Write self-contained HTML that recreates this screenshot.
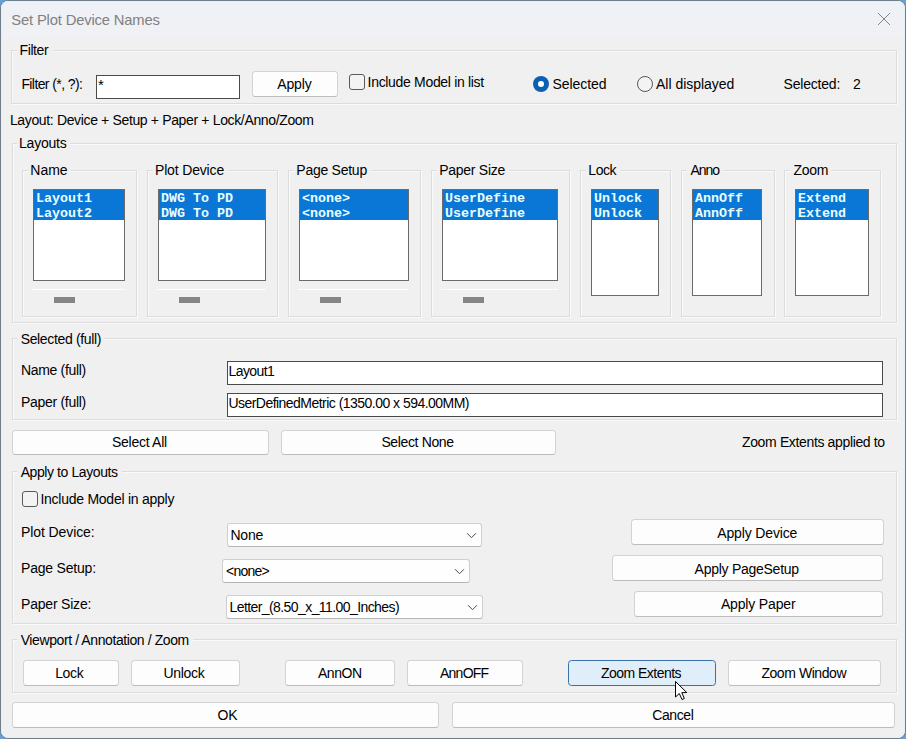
<!DOCTYPE html>
<html><head><meta charset="utf-8"><title>Set Plot Device Names</title>
<style>
*{margin:0;padding:0;box-sizing:border-box}
html,body{width:906px;height:739px;overflow:hidden;background:#6a9fd2}
#win{position:absolute;left:0;top:0;width:906px;height:739px;border-radius:8px;background:#f0f0f0;border:1px solid #6e7e8a;overflow:hidden}
#win::before{content:"";position:absolute;left:0;top:0;right:0;bottom:0;border:1px solid #e3f0f9;border-radius:7px;pointer-events:none;z-index:5}
#title{position:absolute;left:0;top:0;width:904px;height:37px;background:linear-gradient(#eef1f7,#f1f1f5)}
.t{position:absolute;white-space:pre;line-height:1;font-family:'Liberation Sans',sans-serif}
.lbt{font-family:'Liberation Mono',monospace;font-weight:bold;font-size:13.333px;color:#e8ffff}
.abs{position:absolute}
.grp{position:absolute;border:1px solid #dcdcdc;box-shadow:inset 1px 1px 0 #fafafa,1px 1px 0 #fafafa}
.gap{position:absolute;background:#f0f0f0}
.tb{position:absolute;background:#fff;border:1px solid #4a4a4a}
.lb{position:absolute;background:#fff;border:1px solid #6b6b6b}
.sel{position:absolute;background:#0a76d6}
.trk{position:absolute;background:#fdfdfd}
.thumb{position:absolute;background:#858585}
.btn{position:absolute;background:#fdfdfd;border:1px solid #d3d3d3;border-bottom-color:#bcbcbc;border-radius:3.5px}
.btn.hot{background:#e0eef9;border:1px solid #3a71a8}
.cb{position:absolute;background:#fefefe;border:1px solid #cfcfcf;border-bottom-color:#b5b5b5;border-radius:3px}
.chev{position:absolute}
.chk{position:absolute;border:1px solid #5a5a5a;border-radius:3px;background:#f3f3f3}
.radio{position:absolute;width:16px;height:16px;border-radius:50%;border:1.3px solid #595959;background:#f3f3f3}
.radio.on{border:none;background:#0c60b3}
.radio.on::after{content:"";position:absolute;left:5px;top:5px;width:6px;height:6px;border-radius:50%;background:#fff}
</style></head>
<body>
<div id="win"><div id="title"></div>
<div id="c" style="position:absolute;left:-1px;top:-1px;width:906px;height:739px">
<div class="grp" style="left:11px;top:50px;width:886px;height:54px;"></div>
<div class="gap" style="left:17px;top:49px;width:36px;height:4px"></div>
<div class="grp" style="left:12px;top:143px;width:885px;height:180px;"></div>
<div class="gap" style="left:17px;top:142px;width:53px;height:4px"></div>
<div class="grp" style="left:22px;top:170px;width:115px;height:147px;"></div>
<div class="gap" style="left:28px;top:169px;width:43px;height:4px"></div>
<div class="grp" style="left:147px;top:170px;width:131px;height:147px;"></div>
<div class="gap" style="left:153px;top:169px;width:75px;height:4px"></div>
<div class="grp" style="left:288px;top:170px;width:133px;height:147px;"></div>
<div class="gap" style="left:294px;top:169px;width:77px;height:4px"></div>
<div class="grp" style="left:431px;top:170px;width:139px;height:147px;"></div>
<div class="gap" style="left:437px;top:169px;width:72px;height:4px"></div>
<div class="grp" style="left:580px;top:170px;width:91px;height:147px;"></div>
<div class="gap" style="left:586px;top:169px;width:35px;height:4px"></div>
<div class="grp" style="left:681px;top:170px;width:94px;height:147px;"></div>
<div class="gap" style="left:687px;top:169px;width:37px;height:4px"></div>
<div class="grp" style="left:784px;top:170px;width:97px;height:147px;"></div>
<div class="gap" style="left:790px;top:169px;width:41px;height:4px"></div>
<div class="grp" style="left:12px;top:338px;width:885px;height:82px;"></div>
<div class="gap" style="left:17px;top:337px;width:87px;height:4px"></div>
<div class="grp" style="left:12px;top:471px;width:885px;height:153px;"></div>
<div class="gap" style="left:17px;top:470px;width:105px;height:4px"></div>
<div class="grp" style="left:12px;top:639px;width:885px;height:54px;"></div>
<div class="gap" style="left:17px;top:638px;width:176px;height:4px"></div>
<div class="tb" style="left:96px;top:75px;width:144px;height:24px;"></div>
<div class="tb" style="left:227px;top:361px;width:656px;height:24px;"></div>
<div class="tb" style="left:227px;top:393px;width:656px;height:24px;"></div>
<div class="lb" style="left:33px;top:189px;width:92px;height:92px;"></div>
<div class="sel" style="left:34px;top:190px;width:90px;height:30px;"></div>
<div class="trk" style="left:32px;top:289px;width:93px;height:1px;"></div>
<div class="thumb" style="left:54px;top:297px;width:21px;height:6px;"></div>
<div class="lb" style="left:158px;top:189px;width:108px;height:92px;"></div>
<div class="sel" style="left:159px;top:190px;width:106px;height:30px;"></div>
<div class="trk" style="left:157px;top:289px;width:109px;height:1px;"></div>
<div class="thumb" style="left:179px;top:297px;width:21px;height:6px;"></div>
<div class="lb" style="left:299px;top:189px;width:110px;height:92px;"></div>
<div class="sel" style="left:300px;top:190px;width:108px;height:30px;"></div>
<div class="trk" style="left:298px;top:289px;width:111px;height:1px;"></div>
<div class="thumb" style="left:320px;top:297px;width:21px;height:6px;"></div>
<div class="lb" style="left:442px;top:189px;width:116px;height:92px;"></div>
<div class="sel" style="left:443px;top:190px;width:114px;height:30px;"></div>
<div class="trk" style="left:441px;top:289px;width:117px;height:1px;"></div>
<div class="thumb" style="left:463px;top:297px;width:21px;height:6px;"></div>
<div class="lb" style="left:591px;top:189px;width:68px;height:107px;"></div>
<div class="sel" style="left:592px;top:190px;width:66px;height:30px;"></div>
<div class="lb" style="left:692px;top:189px;width:70px;height:107px;"></div>
<div class="sel" style="left:693px;top:190px;width:68px;height:30px;"></div>
<div class="lb" style="left:795px;top:189px;width:74px;height:107px;"></div>
<div class="sel" style="left:796px;top:190px;width:72px;height:30px;"></div>
<div class="btn" style="left:252px;top:71px;width:86px;height:26px;"></div>
<div class="btn" style="left:12px;top:430px;width:257px;height:25px;"></div>
<div class="btn" style="left:281px;top:430px;width:275px;height:25px;"></div>
<div class="btn" style="left:631px;top:519px;width:253px;height:26px;"></div>
<div class="btn" style="left:612px;top:555px;width:271px;height:26px;"></div>
<div class="btn" style="left:634px;top:591px;width:249px;height:26px;"></div>
<div class="btn" style="left:23px;top:660px;width:96px;height:26px;"></div>
<div class="btn" style="left:131px;top:660px;width:109px;height:26px;"></div>
<div class="btn" style="left:285px;top:660px;width:110px;height:26px;"></div>
<div class="btn" style="left:407px;top:660px;width:116px;height:26px;"></div>
<div class="btn hot" style="left:568px;top:660px;width:148px;height:26px;"></div>
<div class="btn" style="left:728px;top:660px;width:153px;height:26px;"></div>
<div class="btn" style="left:12px;top:702px;width:427px;height:26px;"></div>
<div class="btn" style="left:452px;top:702px;width:443px;height:26px;"></div>
<div class="cb" style="left:227px;top:523px;width:255px;height:24px;"></div>
<svg class="chev" style="left:466px;top:532px" width="11" height="7" viewBox="0 0 11 7"><path d="M1 1.2 L5.5 5.7 L10 1.2" fill="none" stroke="#4a4a4a" stroke-width="1"/></svg>
<div class="cb" style="left:222px;top:559px;width:248px;height:24px;"></div>
<svg class="chev" style="left:454px;top:568px" width="11" height="7" viewBox="0 0 11 7"><path d="M1 1.2 L5.5 5.7 L10 1.2" fill="none" stroke="#4a4a4a" stroke-width="1"/></svg>
<div class="cb" style="left:226px;top:595px;width:257px;height:24px;"></div>
<svg class="chev" style="left:467px;top:604px" width="11" height="7" viewBox="0 0 11 7"><path d="M1 1.2 L5.5 5.7 L10 1.2" fill="none" stroke="#4a4a4a" stroke-width="1"/></svg>
<div class="chk" style="left:349px;top:74px;width:16px;height:16px;"></div>
<div class="chk" style="left:22px;top:491px;width:16px;height:16px;"></div>
<div class="radio on" style="left:533px;top:76px"></div>
<div class="radio" style="left:637px;top:76px"></div>
<svg class="abs" style="left:876px;top:11px" width="16" height="16" viewBox="0 0 16 16"><path d="M2 2 L14 14 M14 2 L2 14" stroke="#858585" stroke-width="1" fill="none"/></svg>
<svg class="abs" style="left:675px;top:681px" width="14" height="20" viewBox="0 0 14 20"><path d="M0.5 0.5 L0.5 16 L4.3 12.5 L7 18.5 L9.3 17.5 L6.8 11.6 L11.8 11.6 Z" fill="#fff" stroke="#000" stroke-width="1" stroke-linejoin="round"/></svg>
<div class="t" style="left:11.30px;top:12.97px;font-size:14.8px;color:#808080;letter-spacing:-0.177px;font-weight:normal;font-family:'Liberation Sans';">Set Plot Device Names</div>
<div class="t" style="left:19.50px;top:42.95px;font-size:14px;color:#000;letter-spacing:-0.390px;font-weight:normal;font-family:'Liberation Sans';">Filter</div>
<div class="t" style="left:21.40px;top:77.05px;font-size:14px;color:#000;letter-spacing:-0.595px;font-weight:normal;font-family:'Liberation Sans';">Filter (*, ?):</div>
<div class="t" style="left:98.00px;top:76.90px;font-size:15px;color:#000;letter-spacing:0.000px;font-weight:normal;font-family:'Liberation Sans';">*</div>
<div class="t" style="left:277.20px;top:76.75px;font-size:14px;color:#000;letter-spacing:-0.105px;font-weight:normal;font-family:'Liberation Sans';">Apply</div>
<div class="t" style="left:367.60px;top:75.15px;font-size:14px;color:#000;letter-spacing:-0.318px;font-weight:normal;font-family:'Liberation Sans';">Include Model in list</div>
<div class="t" style="left:552.60px;top:77.15px;font-size:14px;color:#000;letter-spacing:-0.071px;font-weight:normal;font-family:'Liberation Sans';">Selected</div>
<div class="t" style="left:656.00px;top:77.15px;font-size:14px;color:#000;letter-spacing:-0.018px;font-weight:normal;font-family:'Liberation Sans';">All displayed</div>
<div class="t" style="left:783.50px;top:77.15px;font-size:14px;color:#000;letter-spacing:-0.198px;font-weight:normal;font-family:'Liberation Sans';">Selected:</div>
<div class="t" style="left:853.00px;top:77.15px;font-size:14px;color:#000;letter-spacing:0.000px;font-weight:normal;font-family:'Liberation Sans';">2</div>
<div class="t" style="left:9.90px;top:113.15px;font-size:14px;color:#000;letter-spacing:-0.352px;font-weight:normal;font-family:'Liberation Sans';">Layout: Device + Setup + Paper + Lock/Anno/Zoom</div>
<div class="t" style="left:19.00px;top:136.15px;font-size:14px;color:#000;letter-spacing:-0.222px;font-weight:normal;font-family:'Liberation Sans';">Layouts</div>
<div class="t" style="left:30.30px;top:163.35px;font-size:14px;color:#000;letter-spacing:-0.020px;font-weight:normal;font-family:'Liberation Sans';">Name</div>
<div class="t" style="left:155.00px;top:163.35px;font-size:14px;color:#000;letter-spacing:-0.162px;font-weight:normal;font-family:'Liberation Sans';">Plot Device</div>
<div class="t" style="left:296.30px;top:163.35px;font-size:14px;color:#000;letter-spacing:-0.254px;font-weight:normal;font-family:'Liberation Sans';">Page Setup</div>
<div class="t" style="left:439.20px;top:163.35px;font-size:14px;color:#000;letter-spacing:-0.266px;font-weight:normal;font-family:'Liberation Sans';">Paper Size</div>
<div class="t" style="left:588.30px;top:163.35px;font-size:14px;color:#000;letter-spacing:-0.424px;font-weight:normal;font-family:'Liberation Sans';">Lock</div>
<div class="t" style="left:690.60px;top:163.35px;font-size:14px;color:#000;letter-spacing:-1.070px;font-weight:normal;font-family:'Liberation Sans';">Anno</div>
<div class="t" style="left:793.40px;top:163.35px;font-size:14px;color:#000;letter-spacing:-0.241px;font-weight:normal;font-family:'Liberation Sans';">Zoom</div>
<div class="t" style="left:20.70px;top:331.55px;font-size:14px;color:#000;letter-spacing:-0.352px;font-weight:normal;font-family:'Liberation Sans';">Selected (full)</div>
<div class="t" style="left:21.00px;top:363.35px;font-size:14px;color:#000;letter-spacing:-0.329px;font-weight:normal;font-family:'Liberation Sans';">Name (full)</div>
<div class="t" style="left:21.00px;top:395.05px;font-size:14px;color:#000;letter-spacing:-0.301px;font-weight:normal;font-family:'Liberation Sans';">Paper (full)</div>
<div class="t" style="left:228.50px;top:364.15px;font-size:14px;color:#000;letter-spacing:-0.572px;font-weight:normal;font-family:'Liberation Sans';">Layout1</div>
<div class="t" style="left:228.40px;top:395.95px;font-size:14px;color:#000;letter-spacing:-0.530px;font-weight:normal;font-family:'Liberation Sans';">UserDefinedMetric (1350.00 x 594.00MM)</div>
<div class="t" style="left:112.00px;top:435.05px;font-size:14px;color:#000;letter-spacing:-0.272px;font-weight:normal;font-family:'Liberation Sans';">Select All</div>
<div class="t" style="left:381.40px;top:435.15px;font-size:14px;color:#000;letter-spacing:-0.358px;font-weight:normal;font-family:'Liberation Sans';">Select None</div>
<div class="t" style="left:742.00px;top:435.45px;font-size:14px;color:#000;letter-spacing:-0.358px;font-weight:normal;font-family:'Liberation Sans';">Zoom Extents applied to</div>
<div class="t" style="left:20.70px;top:464.65px;font-size:14px;color:#000;letter-spacing:-0.414px;font-weight:normal;font-family:'Liberation Sans';">Apply to Layouts</div>
<div class="t" style="left:40.40px;top:492.25px;font-size:14px;color:#000;letter-spacing:-0.253px;font-weight:normal;font-family:'Liberation Sans';">Include Model in apply</div>
<div class="t" style="left:21.00px;top:525.35px;font-size:14px;color:#000;letter-spacing:-0.092px;font-weight:normal;font-family:'Liberation Sans';">Plot Device:</div>
<div class="t" style="left:21.00px;top:561.25px;font-size:14px;color:#000;letter-spacing:-0.197px;font-weight:normal;font-family:'Liberation Sans';">Page Setup:</div>
<div class="t" style="left:21.00px;top:597.15px;font-size:14px;color:#000;letter-spacing:-0.198px;font-weight:normal;font-family:'Liberation Sans';">Paper Size:</div>
<div class="t" style="left:230.40px;top:527.95px;font-size:14px;color:#000;letter-spacing:-0.194px;font-weight:normal;font-family:'Liberation Sans';">None</div>
<div class="t" style="left:226.00px;top:564.15px;font-size:14px;color:#000;letter-spacing:-0.764px;font-weight:normal;font-family:'Liberation Sans';">&lt;none&gt;</div>
<div class="t" style="left:229.50px;top:600.35px;font-size:14px;color:#000;letter-spacing:-0.581px;font-weight:normal;font-family:'Liberation Sans';">Letter_(8.50_x_11.00_Inches)</div>
<div class="t" style="left:717.20px;top:525.85px;font-size:14px;color:#000;letter-spacing:-0.138px;font-weight:normal;font-family:'Liberation Sans';">Apply Device</div>
<div class="t" style="left:694.60px;top:561.95px;font-size:14px;color:#000;letter-spacing:-0.265px;font-weight:normal;font-family:'Liberation Sans';">Apply PageSetup</div>
<div class="t" style="left:720.90px;top:597.35px;font-size:14px;color:#000;letter-spacing:-0.161px;font-weight:normal;font-family:'Liberation Sans';">Apply Paper</div>
<div class="t" style="left:20.70px;top:632.85px;font-size:14px;color:#000;letter-spacing:-0.405px;font-weight:normal;font-family:'Liberation Sans';">Viewport / Annotation / Zoom</div>
<div class="t" style="left:55.20px;top:666.45px;font-size:14px;color:#000;letter-spacing:-0.357px;font-weight:normal;font-family:'Liberation Sans';">Lock</div>
<div class="t" style="left:163.40px;top:666.45px;font-size:14px;color:#000;letter-spacing:-0.279px;font-weight:normal;font-family:'Liberation Sans';">Unlock</div>
<div class="t" style="left:318.00px;top:666.45px;font-size:14px;color:#000;letter-spacing:-0.475px;font-weight:normal;font-family:'Liberation Sans';">AnnON</div>
<div class="t" style="left:440.00px;top:666.45px;font-size:14px;color:#000;letter-spacing:-0.750px;font-weight:normal;font-family:'Liberation Sans';">AnnOFF</div>
<div class="t" style="left:601.00px;top:666.45px;font-size:14px;color:#000;letter-spacing:-0.533px;font-weight:normal;font-family:'Liberation Sans';">Zoom Extents</div>
<div class="t" style="left:761.40px;top:666.45px;font-size:14px;color:#000;letter-spacing:-0.436px;font-weight:normal;font-family:'Liberation Sans';">Zoom Window</div>
<div class="t" style="left:217.40px;top:708.35px;font-size:14px;color:#000;letter-spacing:0.000px;font-weight:normal;font-family:'Liberation Sans';">OK</div>
<div class="t" style="left:652.20px;top:708.35px;font-size:14px;color:#000;letter-spacing:-0.374px;font-weight:normal;font-family:'Liberation Sans';">Cancel</div>
<div class="t lbt" style="left:36px;top:191.91px">Layout1</div>
<div class="t lbt" style="left:36px;top:206.91px">Layout2</div>
<div class="t lbt" style="left:161px;top:191.91px">DWG To PD</div>
<div class="t lbt" style="left:161px;top:206.91px">DWG To PD</div>
<div class="t lbt" style="left:302px;top:191.91px">&lt;none&gt;</div>
<div class="t lbt" style="left:302px;top:206.91px">&lt;none&gt;</div>
<div class="t lbt" style="left:445px;top:191.91px">UserDefine</div>
<div class="t lbt" style="left:445px;top:206.91px">UserDefine</div>
<div class="t lbt" style="left:594px;top:191.91px">Unlock</div>
<div class="t lbt" style="left:594px;top:206.91px">Unlock</div>
<div class="t lbt" style="left:695px;top:191.91px">AnnOff</div>
<div class="t lbt" style="left:695px;top:206.91px">AnnOff</div>
<div class="t lbt" style="left:798px;top:191.91px">Extend</div>
<div class="t lbt" style="left:798px;top:206.91px">Extend</div>
</div></div>
</body></html>
